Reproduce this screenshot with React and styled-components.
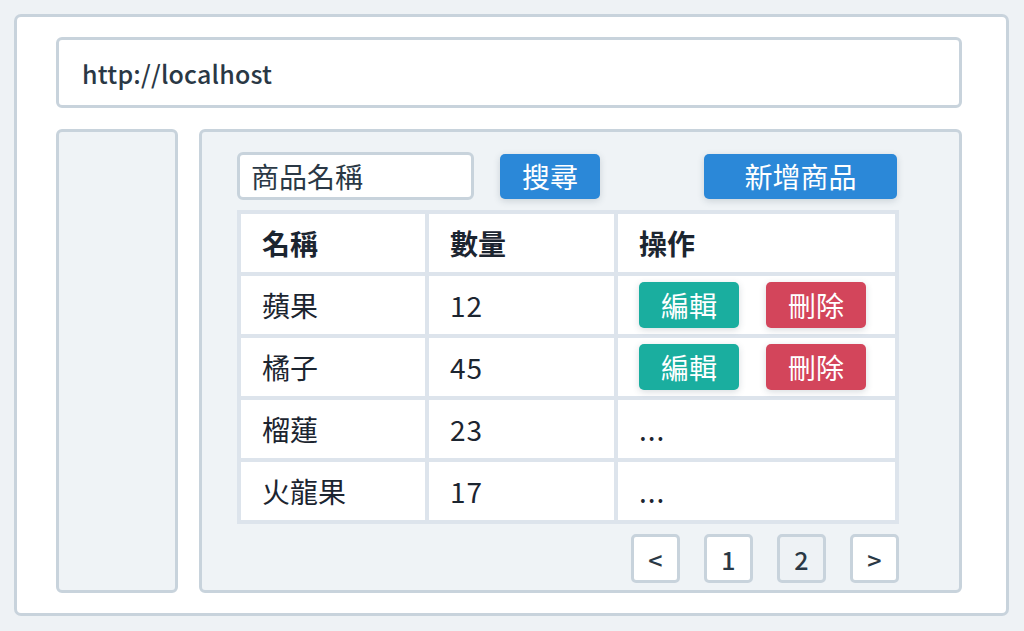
import React from 'react';
import styled, { createGlobalStyle } from 'styled-components';

const GlobalStyle = createGlobalStyle`
  html, body {
    margin: 0;
    background: #eef2f5;
  }
  body {
    font-family: "Noto Sans CJK TC", "Noto Sans", sans-serif;
    color: #1f2a36;
  }
  * {
    box-sizing: border-box;
  }
`;

const line = '#c8d3dc';

const Page = styled.div`
  padding: 14px 0 0 14px;
`;

const Frame = styled.div`
  width: 995px;
  height: 602px;
  display: flex;
  flex-direction: column;
  gap: 21px;
  padding: 20px 44px 20px 39px;
  background: #fff;
  border: 3px solid ${line};
  border-radius: 7px;
`;

const AddressBar = styled.div`
  height: 71px;
  display: flex;
  align-items: center;
  padding-left: 23px;
  border: 3px solid ${line};
  border-radius: 6px;
  font-size: 25px;
  font-weight: 500;
  color: #2a3845;
  letter-spacing: 0.2px;
`;

const Body = styled.div`
  flex: 1;
  display: flex;
  gap: 21px;
`;

const Sidebar = styled.aside`
  width: 122px;
  background: #eff3f6;
  border: 3px solid ${line};
  border-radius: 6px;
`;

const Main = styled.main`
  flex: 1;
  padding: 20px 0 0 35px;
  background: #eff3f6;
  border: 3px solid ${line};
  border-radius: 6px;
`;

const Toolbar = styled.div`
  width: 660px;
  height: 48px;
  display: flex;
  align-items: center;
  justify-content: space-between;
`;

const SearchGroup = styled.div`
  display: flex;
  align-items: center;
  gap: 26px;
`;

const SearchInput = styled.div`
  width: 237px;
  height: 48px;
  display: flex;
  align-items: center;
  padding-left: 11px;
  background: #fff;
  border: 3px solid ${line};
  border-radius: 6px;
  font-size: 28px;
  color: #2a3845;
`;

const colors = {
  blue: '#2b88d8',
  teal: '#1aae9f',
  red: '#d3455b',
};

const Button = styled.button`
  width: ${(p) => p.$w}px;
  height: ${(p) => p.$h || 45}px;
  display: flex;
  align-items: center;
  justify-content: center;
  padding: 0;
  border: none;
  border-radius: 5px;
  background: ${(p) => colors[p.$tone]};
  color: #fff;
  font-family: inherit;
  font-size: 28px;
  box-shadow: 0 2px 7px rgba(40, 60, 80, 0.18);
`;

const Table = styled.table`
  width: 662px;
  margin-top: 10px;
  table-layout: fixed;
  border-collapse: separate;
  border-spacing: 4px;
  background: #dde4ec;
`;

const Cell = styled.td`
  height: 58px;
  padding: 0 0 0 21px;
  background: #fff;
  font-size: 28px;
  font-weight: ${(p) => (p.$head ? 700 : 400)};
  text-align: left;
  color: #1c2530;
  vertical-align: middle;
`;

const Num = styled.span`
  letter-spacing: 1px;
`;

const Actions = styled.div`
  display: flex;
  align-items: center;
  gap: 27px;
`;

const Pager = styled.div`
  width: 662px;
  margin-top: 10px;
  display: flex;
  justify-content: flex-end;
  gap: 24px;
`;

const PageButton = styled.div`
  width: 49px;
  height: 49px;
  display: flex;
  align-items: center;
  justify-content: center;
  background: ${(p) => (p.$active ? '#eef2f5' : '#fff')};
  border: 3px solid ${line};
  border-radius: 5px;
  font-size: 25px;
  font-weight: 500;
  color: #2a3845;
`;

const rows = [
  { name: '蘋果', qty: 12, actions: true },
  { name: '橘子', qty: 45, actions: true },
  { name: '榴蓮', qty: 23 },
  { name: '火龍果', qty: 17 },
];

export default function App() {
  return (
    <>
      <GlobalStyle />
      <Page>
        <Frame>
          <AddressBar>http://localhost</AddressBar>
          <Body>
            <Sidebar />
            <Main>
              <Toolbar>
                <SearchGroup>
                  <SearchInput>商品名稱</SearchInput>
                  <Button $tone="blue" $w={100}>搜尋</Button>
                </SearchGroup>
                <Button $tone="blue" $w={193}>新增商品</Button>
              </Toolbar>
              <Table>
                <colgroup>
                  <col style={{ width: 184 }} />
                  <col style={{ width: 185 }} />
                  <col style={{ width: 277 }} />
                </colgroup>
                <thead>
                  <tr>
                    <Cell as="th" $head>名稱</Cell>
                    <Cell as="th" $head>數量</Cell>
                    <Cell as="th" $head>操作</Cell>
                  </tr>
                </thead>
                <tbody>
                  {rows.map((r) => (
                    <tr key={r.name}>
                      <Cell>{r.name}</Cell>
                      <Cell><Num>{r.qty}</Num></Cell>
                      <Cell>
                        {r.actions ? (
                          <Actions>
                            <Button $tone="teal" $w={100} $h={46}>編輯</Button>
                            <Button $tone="red" $w={100} $h={46}>刪除</Button>
                          </Actions>
                        ) : (
                          <Num>...</Num>
                        )}
                      </Cell>
                    </tr>
                  ))}
                </tbody>
              </Table>
              <Pager>
                <PageButton>&lt;</PageButton>
                <PageButton>1</PageButton>
                <PageButton $active>2</PageButton>
                <PageButton>&gt;</PageButton>
              </Pager>
            </Main>
          </Body>
        </Frame>
      </Page>
    </>
  );
}
